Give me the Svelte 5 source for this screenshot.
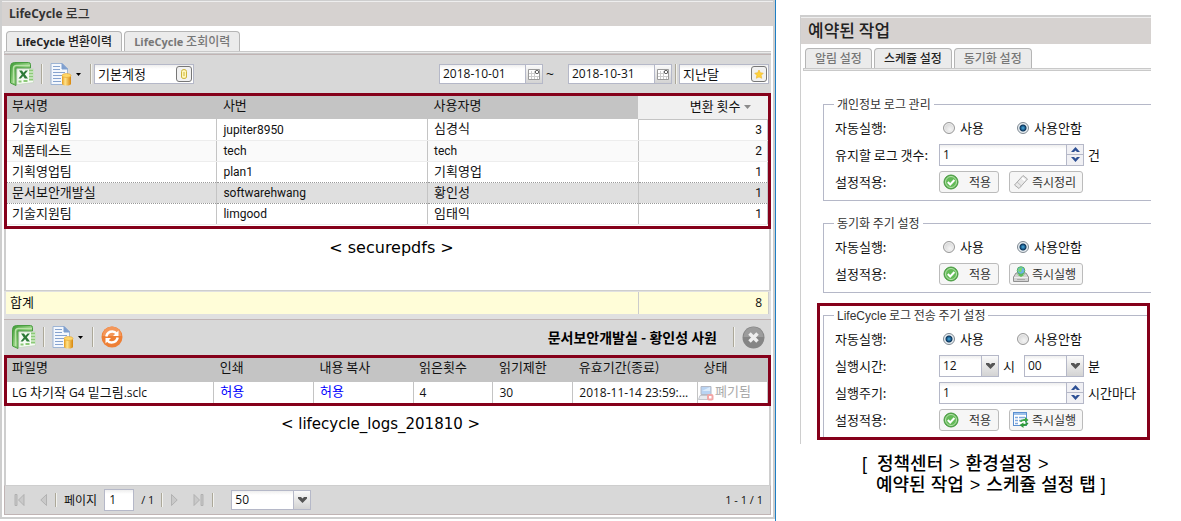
<script>
  const users = [
    { dept: '기술지원팀', id: 'jupiter8950', name: '심경식', count: 3 },
    { dept: '제품테스트', id: 'tech', name: 'tech', count: 2 },
    { dept: '기획영업팀', id: 'plan1', name: '기획영업', count: 1 },
    { dept: '문서보안개발실', id: 'softwarehwang', name: '황인성', count: 1, selected: true },
    { dept: '기술지원팀', id: 'limgood', name: '임태익', count: 1 }
  ];
  const latin = (s) => /^[\x00-\x7f]+$/.test(s);
</script>

{#snippet excel()}
  <svg class="ico" width="24" height="24" viewBox="0 0 24 24" aria-hidden="true">
    <defs>
      <linearGradient id="xg" x1="0" y1="0" x2="1" y2="1">
        <stop offset="0" stop-color="#3d9a35" /><stop offset=".5" stop-color="#8fcf7c" /><stop offset="1" stop-color="#4fa33f" />
      </linearGradient>
    </defs>
    <path d="M4.500 .5H18.500Q20.500 .5 20.500 2.500V6H6V23.500L.5 21V4.500Q.5 .5 4.500 .5Z" fill="url(#xg)" stroke="#4a9c42" />
    <path d="M3.500 21V6.500Q3.500 3.500 6.500 3.500H20" fill="none" stroke="#b9e2a8" stroke-width="1.500" />
    <path d="M7 7H23.500V20.500L7 22.500Z" fill="#f6fbf4" stroke="#b5cfae" stroke-width=".5" />
    <path d="M19 8.500h4M19 11.500h4M19 14.500h4M19 17.500h4" stroke="#8cc978" stroke-width="2" />
    <path d="M8.500 19.500h3M13.500 19h4" stroke="#8cc978" stroke-width="2" />
    <path d="M9 8.500h3l1.500 2.200L15.500 8.500H18l-3.200 3.700L18 16.500h-3.200l-1.700-2.500-2.200 2.500H8.500l3.300-4Z" fill="#2d7a38" />
  </svg>
{/snippet}

{#snippet doc()}
  <svg class="ico" width="22" height="24" viewBox="0 0 22 24" aria-hidden="true">
    <defs>
      <linearGradient id="cy" x1="0" x2="1"><stop offset="0" stop-color="#e59a1a" /><stop offset=".35" stop-color="#ffe38a" /><stop offset="1" stop-color="#d8860b" /></linearGradient>
    </defs>
    <path d="M1 1.500H12L17.500 7V22.500H1Z" fill="#f4f8fd" stroke="#9db4d4" />
    <path d="M12 1.500V7H17.500Z" fill="#7f9fce" stroke="#7f9fce" />
    <path d="M3 4.500h7M3 7.500h7M3 10.500h12M3 13.500h10M3 16.500h8M3 19.500h8" stroke="#86a3cf" />
    <path d="M12 13.500V21.500Q12 23.500 16.500 23.500T21 21.500V13.500Z" fill="url(#cy)" />
    <ellipse cx="16.500" cy="13.500" rx="4.500" ry="2" fill="#ffd768" stroke="#e0a030" stroke-width=".6" />
  </svg>
  <svg width="5" height="3" viewBox="0 0 5 3" aria-hidden="true"><path d="M0 0H5L2.500 3Z" fill="#000" /></svg>
{/snippet}

{#snippet calendar()}
  <svg width="12" height="12" viewBox="0 0 12 12" aria-hidden="true">
    <path d="M.5 1.500H11.500V11.500H.5Z" fill="#fff" stroke="#999" />
    <path d="M3.500 3V11M6.500 3V11M9.500 8V11M1 5.500H7M1 8.500H11" stroke="#ccc" />
    <rect x="7.500" y="2.500" width="3" height="3" rx="1" fill="#fff" stroke="#333" />
  </svg>
{/snippet}

{#snippet check()}
  <svg width="16" height="16" viewBox="0 0 16 16" aria-hidden="true">
    <circle cx="8" cy="8" r="7" fill="#58ad4e" stroke="#479a40" />
    <circle cx="8" cy="8" r="5.500" fill="#63bb58" stroke="#b8e2ad" />
    <path d="M4.800 8l2.400 2.500L11.400 6" fill="none" stroke="#fff" stroke-width="2" />
  </svg>
{/snippet}

{#snippet chevron()}
  <span class="drop"><svg width="9" height="6" viewBox="0 0 9 6" aria-hidden="true"><path d="M0 0H3L4.500 1.500L6 0H9V1.500L4.500 6L0 1.500Z" fill="#555" /></svg></span>
{/snippet}

{#snippet spinner(id)}
  <span class="box spin">
    <input {id} class="num" type="text" inputmode="numeric" value="1" />
    <span class="steps">
      <button type="button" aria-label="증가"><svg width="9" height="5" viewBox="0 0 9 5"><path d="M0 5L4.500 0L9 5H6L4.500 3.500L3 5Z" fill="#2c4f94" /></svg></button>
      <button type="button" aria-label="감소"><svg width="9" height="5" viewBox="0 0 9 5"><path d="M0 0L4.500 5L9 0H6L4.500 1.500L3 0Z" fill="#2c4f94" /></svg></button>
    </span>
  </span>
{/snippet}

{#snippet auto(name, on)}
  <div class="row" role="radiogroup" aria-label="자동실행">
    <span class="lab">자동실행:</span>
    <label class="radio first"><input type="radio" {name} checked={on} />사용</label>
    <label class="radio"><input type="radio" {name} checked={!on} />사용안함</label>
  </div>
{/snippet}

<div class="page">
  <main class="log">
    <div class="frame">
      <h1 class="title">LifeCycle <b>로그</b></h1>
      <div class="inner">
        <div class="tabs" role="tablist">
          <button type="button" class="tab on" role="tab" aria-selected="true">LifeCycle <b>변환이력</b></button>
          <button type="button" class="tab" role="tab" aria-selected="false">LifeCycle <b>조회이력</b></button>
        </div>
        <div class="strip"></div>

        <div class="bar top">
          <button type="button" class="plain" aria-label="Excel">{@render excel()}</button>
          <i class="sep"></i>
          <button type="button" class="plain menu" aria-label="문서">{@render doc()}</button>
          <i class="sep near"></i>
          <span class="box account">
            <input class="ko" type="text" aria-label="계정" value="기본계정" />
            <button type="button" class="pick" aria-label="계정 선택">
              <svg width="12" height="12" viewBox="0 0 12 12"><path d="M3.500 3.500Q3.500 1.500 6 1.500T8.500 3.500V9Q8.500 10.500 6 10.500T3.500 9Z" fill="#fff6b8" stroke="#cdb43c" /><path d="M6 4V8" stroke="#cdb43c" /></svg>
            </button>
          </span>
          <span class="grow"></span>
          <span class="box date">
            <input type="text" aria-label="시작일" value="2018-10-01" />
            <button type="button" class="cal" aria-label="시작일 달력">{@render calendar()}</button>
          </span>
          <span class="tilde">~</span>
          <span class="box date">
            <input type="text" aria-label="종료일" value="2018-10-31" />
            <button type="button" class="cal" aria-label="종료일 달력">{@render calendar()}</button>
          </span>
          <i class="sep tight"></i>
          <span class="box period">
            <input class="ko" type="text" aria-label="기간" value="지난달" />
            <button type="button" class="pick" aria-label="기간 선택">
              <svg width="12" height="12" viewBox="0 0 12 12"><path d="M6 2L7.300 4.700L10.300 5.200L8.200 7.300L8.700 10.300L6 8.900L3.300 10.300L3.800 7.300L1.700 5.200L4.700 4.700Z" fill="#ffd23c" stroke="#eeb52b" stroke-width=".6" /></svg>
            </button>
          </span>
        </div>

        <div class="red list">
          <table class="users">
            <colgroup><col class="c27" /><col class="c28" /><col class="c28" /><col /></colgroup>
            <thead>
              <tr>
                <th>부서명</th><th>사번</th><th>사용자명</th>
                <th class="sorted">변환 횟수<svg width="7" height="4" viewBox="0 0 7 4" aria-hidden="true"><path d="M0 0H7L3.500 4Z" fill="#8a8a8a" /></svg></th>
              </tr>
            </thead>
            <tbody>
              {#each users as u}
                <tr class:sel={u.selected}>
                  <td>{u.dept}</td>
                  <td class="la">{u.id}</td>
                  <td class:la={latin(u.name)}>{u.name}</td>
                  <td class="la n">{u.count}</td>
                </tr>
              {/each}
            </tbody>
          </table>
        </div>

        <div class="blank first"><p class="note">&lt; securepdfs &gt;</p></div>
        <div class="sum"><span>합계</span><span class="total">8</span></div>

        <div class="bar sub">
          <button type="button" class="plain" aria-label="Excel">{@render excel()}</button>
          <i class="sep"></i>
          <button type="button" class="plain menu" aria-label="문서">{@render doc()}</button>
          <i class="sep"></i>
          <button type="button" class="plain" aria-label="새로고침">
            <svg width="22" height="22" viewBox="0 0 22 22">
              <circle cx="11" cy="11" r="10.500" fill="#ee7f35" /><path d="M1.500 10a9.500 9.500 0 0 1 19 0Z" fill="#f4975a" />
              <path d="M5.300 10.500Q6.500 5.500 11.500 5.500Q14 5.500 15.500 7.500" fill="none" stroke="#fff" stroke-width="2.500" />
              <path d="M17.500 4.500V10H12Z" fill="#fff" />
              <path d="M16.700 11.500Q15.500 16.500 10.500 16.500Q8 16.500 6.500 14.500" fill="none" stroke="#fff" stroke-width="2.500" />
              <path d="M4.500 17.500V12H10Z" fill="#fff" />
            </svg>
          </button>
          <span class="grow"></span>
          <strong class="who">문서보안개발실 - 황인성 사원</strong>
          <i class="sep"></i>
          <button type="button" class="plain" aria-label="닫기">
            <svg width="23" height="23" viewBox="0 0 23 23">
              <circle cx="11.500" cy="11.500" r="11" fill="#858585" /><path d="M1.500 11a10 10 0 0 1 20 0Z" fill="#9c9c9c" />
              <path d="M7.500 7.500L15.500 15.500M15.500 7.500L7.500 15.500" stroke="#eee" stroke-width="3.500" />
            </svg>
          </button>
        </div>

        <div class="red">
          <table class="files">
            <colgroup><col class="f1" /><col class="f2" /><col class="f2" /><col class="f3" /><col class="f3" /><col class="f4" /><col /></colgroup>
            <thead>
              <tr><th>파일명</th><th>인쇄</th><th>내용 복사</th><th>읽은횟수</th><th>읽기제한</th><th>유효기간(종료)</th><th>상태</th></tr>
            </thead>
            <tbody>
              <tr>
                <td class="la">LG <span class="ko">차기작</span> G4 <span class="ko">밑그림</span>.sclc</td>
                <td class="allow">허용</td>
                <td class="allow">허용</td>
                <td class="la">4</td>
                <td class="la">30</td>
                <td class="la">2018-11-14 23:59:...</td>
                <td class="state">
                  <svg width="16" height="16" viewBox="0 0 16 16" aria-hidden="true">
                    <path d="M3 1.500H13V9.500H3Z" fill="#b9d3f2" stroke="#b4b8c4" /><path d="M4 6L12 2V6Z" fill="#dcebfb" />
                    <path d="M2 10.500H13L15 14.500H.5Z" fill="#e8eaee" stroke="#c3c6cd" /><rect x="9" y="9" width="6.500" height="6.500" rx="2" fill="#f3a6a6" /><rect x="11" y="11" width="2.500" height="2.500" fill="#fff" />
                  </svg>폐기됨
                </td>
              </tr>
            </tbody>
          </table>
        </div>

        <div class="blank second"><p class="note">&lt; lifecycle_logs_201810 &gt;</p></div>

        <div class="pager">
          <button type="button" class="plain" aria-label="처음"><svg width="11" height="12" viewBox="0 0 11 12"><path d="M1 .5H3V11.500H1ZM10 .5V11.500L4.500 6Z" fill="#c9c9c9" stroke="#aaa" stroke-width=".8" /></svg></button>
          <button type="button" class="plain prev" aria-label="이전"><svg width="7" height="12" viewBox="0 0 7 12"><path d="M6.500 .5V11.500L.8 6Z" fill="#c9c9c9" stroke="#aaa" stroke-width=".8" /></svg></button>
          <i class="sep short"></i>
          <label for="pg">페이지</label>
          <input id="pg" class="pg" type="text" value="1" />
          <span class="of">/ 1</span>
          <i class="sep short"></i>
          <button type="button" class="plain" aria-label="다음"><svg width="7" height="12" viewBox="0 0 7 12"><path d="M.5 .5V11.500L6.200 6Z" fill="#c9c9c9" stroke="#aaa" stroke-width=".8" /></svg></button>
          <button type="button" class="plain last" aria-label="마지막"><svg width="11" height="12" viewBox="0 0 11 12"><path d="M8 .5H10V11.500H8ZM1 .5V11.500L6.500 6Z" fill="#c9c9c9" stroke="#aaa" stroke-width=".8" /></svg></button>
          <i class="sep short"></i>
          <span class="box size"><select aria-label="페이지 크기"><option>50</option></select>{@render chevron()}</span>
          <span class="grow"></span>
          <span>1 - 1 / 1</span>
        </div>
      </div>
    </div>
  </main>

  <aside class="side">
    <section class="jobs">
      <h2 class="title big">예약된 작업</h2>
      <div class="tabs" role="tablist">
        <button type="button" class="tab" role="tab" aria-selected="false"><b>알림 설정</b></button>
        <button type="button" class="tab on" role="tab" aria-selected="true"><b>스케쥴 설정</b></button>
        <button type="button" class="tab" role="tab" aria-selected="false"><b>동기화 설정</b></button>
      </div>
      <div class="strip"></div>

      <form class="forms">
        <fieldset>
          <legend>개인정보 로그 관리</legend>
          {@render auto('a', false)}
          <div class="row"><label class="lab" for="keep">유지할 로그 갯수:</label>{@render spinner('keep')}<span class="unit">건</span></div>
          <div class="row">
            <span class="lab">설정적용:</span>
            <button type="button" class="btn apply">{@render check()}<span>적용</span></button>
            <button type="button" class="btn run">
              <svg width="16" height="16" viewBox="0 0 16 16" aria-hidden="true"><path d="M10 1.500L14.500 5L6 14.500L1.500 11Z" fill="#e8e8e8" stroke="#aaa" /><path d="M4 8L8.500 12" stroke="#c0c0c0" /><path d="M9 4L12 6.500" stroke="#fff" stroke-width="2" /></svg><span>즉시정리</span>
            </button>
          </div>
        </fieldset>

        <fieldset>
          <legend>동기화 주기 설정</legend>
          {@render auto('b', false)}
          <div class="row">
            <span class="lab">설정적용:</span>
            <button type="button" class="btn apply">{@render check()}<span>적용</span></button>
            <button type="button" class="btn run">
              <svg width="16" height="16" viewBox="0 0 16 16" aria-hidden="true"><path d="M3 7H13L15.500 11V15.500H.5V11Z" fill="#d2d2d2" stroke="#909090" /><path d="M1 11.500H15" stroke="#eee" /><path d="M4 13.500H12" stroke="#aaa" /><path d="M6 7H10V8.500H12L8 11L4 8.500H6Z" fill="#5fbe58" /><circle cx="8" cy="4.500" r="3.800" fill="#6db4ea" stroke="#55b35a" /><path d="M5 4Q7 .8 9.500 2Q8 4 8.500 5.500Q6.500 7.500 5 4Z" fill="#7bdc68" /></svg><span>즉시실행</span>
            </button>
          </div>
        </fieldset>

        <div class="red mark">
          <fieldset class="open">
            <legend><span class="arial">LifeCycle</span> 로그 전송 주기 설정</legend>
            {@render auto('c', true)}
            <div class="row">
              <label class="lab" for="hour">실행시간:</label>
              <span class="box time"><select id="hour"><option>12</option></select>{@render chevron()}</span>
              <span class="unit hour">시</span>
              <span class="box time"><select aria-label="분"><option>00</option></select>{@render chevron()}</span>
              <span class="unit">분</span>
            </div>
            <div class="row"><label class="lab" for="cycle">실행주기:</label>{@render spinner('cycle')}<span class="unit">시간마다</span></div>
            <div class="row">
              <span class="lab">설정적용:</span>
              <button type="button" class="btn apply">{@render check()}<span>적용</span></button>
              <button type="button" class="btn run">
                <svg width="16" height="16" viewBox="0 0 16 16" aria-hidden="true"><rect x=".5" y=".5" width="13" height="13" fill="#fff" stroke="#5b8fd0" /><path d="M1 2H13" stroke="#9cc0ea" stroke-width="2" /><path d="M2 5.500h3M2 8.500h3M2 11.500h3M6 5.500h6M6 8.500h3" stroke="#7fa9de" stroke-width="1.500" /><path d="M6.500 9.500Q8 6.500 12 7V5L15.500 8L12 11V9Q9.500 8.500 8.500 10Z" fill="#3da648" /><path d="M15.500 11Q14 14.500 10.500 14V16L6.500 13L10.500 10.500V12Q12.500 12 13.500 10.500Z" fill="#2f9a3c" /></svg><span>즉시실행</span>
              </button>
            </div>
          </fieldset>
        </div>
      </form>
    </section>
    <div class="path">
      <p>[&nbsp; 정책센터 <i>&gt;</i> 환경설정 <i>&gt;</i></p>
      <p class="next">예약된 작업 <i>&gt;</i> 스케쥴 설정 탭 ]</p>
    </div>
  </aside>
</div>

<style>
  :global(body) { margin: 0; background: #fff; }
  .page {
    --ko: 'Noto Sans CJK KR', sans-serif;
    --la: 'Open Sans', 'Noto Sans CJK KR', sans-serif;
    display: grid;
    grid-template-columns: minmax(0, 776fr) minmax(0, 351fr);
    column-gap: 24px;
    padding-right: 30px;
    font: 13px/16px var(--ko);
    color: #111;
  }
  .page * { box-sizing: border-box; }
  button, input, select { font: inherit; color: inherit; margin: 0; padding: 0; border: 0; background: none; }
  h1, h2, p { margin: 0; }
  svg { display: block; flex: none; }
  .grow { flex: 1; }

  .log { border-right: 1px solid #1f7fc4; padding-bottom: 2px; }
  .frame { border: 2px solid #cecece; border-top: 1px solid #cecece; }
  .title { height: 25px; border-top: 1px solid #eee; background: #d6d2d0; padding: 0 7px; font: bold 12px/23px var(--la); color: #333; }
  .title b { font: 500 13px/21px var(--ko); }
  .title.big { height: 27px; padding: 0 7px; font: 500 17px/24px var(--ko); color: #222; }
  .inner { padding: 0 2px 2px; }
  .tabs { display: flex; gap: 2px; padding: 5px 2px 0; }
  .tab { height: 20px; padding: 0 9px; border: 1px solid #b5b5b5; border-bottom: 0; border-radius: 4px 4px 0 0; background: #ebebeb; font: bold 11px/20px var(--la); color: #777; white-space: nowrap; }
  .tab b { font: 500 12px/18px var(--ko); }
  .tab.on { color: #222; }
  .strip { height: 3px; border: 1px solid #c9c9c9; border-right: 0; background: #ebebeb; }

  .bar { display: flex; align-items: center; gap: 7px; padding: 0 2px 0 6px; background: #d8d8d8; border-top: 1px solid #c0b4b4; }
  .bar.top { height: 39px; }
  .bar.sub { height: 36px; padding: 0 6px 0 8px; }
  .plain { display: flex; align-items: center; }
  .menu { gap: 4px; padding: 0 2px 0 0; }
  .sep { width: 2px; height: 20px; border-left: 1px solid #aca899; border-right: 1px solid #f2f2ee; }
  .sep.short { height: 14px; }
  .sep.near { margin-right: -5px; }
  .sep.tight { margin: 0 -5px 0 -4px; }
  .bar .sep { flex: none; }
  .box { display: flex; height: 20px; border: 1px solid #b5b8c8; background: linear-gradient(#eee, #fff 4px); font: 12px/18px var(--la); }
  .box input, .box select { flex: 1; width: 100%; min-width: 0; padding: 0 3px; appearance: none; }
  .box input.ko { font: 13px/18px var(--ko); }
  .account { width: 100px; }
  .period { width: 90px; }
  .date { width: 104px; }
  .pick { display: flex; align-items: center; justify-content: center; flex: none; width: 16px; margin: 1px; border: 1px solid #777; border-radius: 3px; background: #f1f1f1; }
  .cal, .drop { display: flex; align-items: center; justify-content: center; flex: none; width: 17px; border-left: 1px solid #b5b8c8; background: linear-gradient(#fafafa, #d3d3d3); }
  .drop { pointer-events: none; }
  .tilde { width: 15px; margin: 0 0 0 -4px; font: 14px/16px var(--la); }

  .red { border: 3px solid #85001a; }
  .list { padding-bottom: 1px; }
  table { width: 100%; table-layout: fixed; border-collapse: collapse; }
  th, td { padding: 0 6px 0 5px; text-align: left; font-weight: 400; white-space: nowrap; overflow: hidden; }
  th + th, td + td { padding-left: 6px; }
  th { height: 23px; padding-bottom: 5px; background: #c4c4c4; }
  th.sorted { background: #f0f0f0; border-bottom: 1px solid #c4c4c4; text-align: right; padding: 0 17px 2px 0; }
  th.sorted svg { display: inline-block; margin: 0 0 2px 3px; }
  td { height: 21px; padding-bottom: 2px; border-right: 1px solid #c4c4c4; border-bottom: 1px solid #ededed; }
  td.la { font: 12px/16px Roboto, var(--la); padding-top: 1px; padding-bottom: 0; }
  td.n { text-align: right; padding-right: 5px; }
  tr:nth-child(even) td { background: #fafafa; }
  tr.sel td { background: #dfdfdf; border-bottom: 1px dotted #999; }
  tr:has(+ .sel) td { border-bottom: 1px dotted #999; }
  .c27 { width: 27.600%; }
  .c28 { width: 27.700%; }
  .files th { height: 24px; }
  .files td { border-bottom: 0; }
  .files td.la { font: 12px/16px var(--la); }
  .files .ko { font: 13px/16px var(--ko); }
  .f1 { width: 27.200%; }
  .f2 { width: 13.100%; }
  .f3 { width: 10.500%; }
  .f4 { width: 16.400%; }
  .allow { color: #00f; }
  .files td.state { padding: 0; color: #aaa; }
  .state svg { display: inline-block; vertical-align: middle; margin-right: 1px; }

  .blank { border: solid #cecece; border-width: 0 2px; text-align: center; }
  .blank.first { height: 62px; padding-top: 9px; border-bottom-width: 1px; }
  .blank.second { height: 79px; padding-top: 8px; }
  .note { font: 16px/20px 'DejaVu Sans', var(--ko); color: #000; padding-left: 8px; }
  .second .note { padding: 0 14px 0 0; font-size: 15px; }
  .sum { display: flex; justify-content: space-between; height: 28px; padding: 1px 2px 5px; background: #e0e0e0; line-height: 20px; }
  .sum span { flex: 1; padding-left: 4px; background: #fffdd8; }
  .sum .total { flex: 0 0 17.200%; border: solid #ccc; border-width: 0 1px; padding-right: 6px; text-align: right; font: 12px/22px var(--la); }
  .who { font: bold 14px/16px var(--ko); margin-right: 9px; color: #000; }

  .pager { display: flex; align-items: center; gap: 7px; height: 30px; padding: 0 7px 0 8px; border: 1px solid #c0b4b4; border-top-color: #cecece; background: #d8d8d8; font: 11px/16px var(--la); }
  .pager .plain { padding: 0 1px; }
  .pager .prev { margin: 0 0 0 6px; }
  .pager .last { margin: 0 0 0 6px; }
  .pager label { font: 12px/16px var(--ko); }
  .pg { width: 30px; height: 22px; padding: 0 4px; border: 1px solid #b5b8c8; background: linear-gradient(#eee, #fff 4px); font: 12px/20px var(--la); }
  .size { width: 80px; margin-left: 10px; }

  .side { padding-top: 15px; }
  .jobs { border: solid #cecece; border-width: 2px 0 0 1px; padding-bottom: 4px; margin-bottom: 10px; }
  .jobs .tabs { padding: 4px 4px 0; }
  .jobs .strip { margin-left: 2px; }
  .forms { display: block; padding: 25px 0 0 22px; }
  fieldset { min-width: 0; margin: 0 0 14px; padding: 2px 0 5px 11px; border: 1px solid #b5b8c8; border-right: 0; }
  fieldset:nth-of-type(2) { margin: 0; }
  legend { height: 16px; margin-left: -1px; padding: 0 3px; font: 12px/16px var(--ko); color: #333; }
  .arial { font: 12px/16px 'Liberation Sans', sans-serif; }
  .row { display: flex; align-items: center; height: 27px; white-space: nowrap; }
  .lab { flex: 0 0 104px; }
  .radio { display: flex; align-items: center; gap: 5px; padding-left: 4px; }
  .radio.first { width: 74px; }
  .radio input { appearance: none; width: 12px; height: 12px; border: 1px solid #999; border-radius: 50%; background: radial-gradient(circle at 60% 65%, #f4f4f4, #ccc); box-shadow: inset 0 0 0 1px #eee; }
  .radio input:checked { border-color: #7d8790; background: radial-gradient(circle at 50% 50%, #4fb0dd 0, #1c5f92 2px, #0d3457 3px, #e8eef2 4px); box-shadow: none; }
  .row .box { height: 22px; line-height: 20px; }
  .spin { width: 145px; }
  .time { width: 60px; }
  .steps { display: flex; flex-direction: column; flex: none; width: 17px; border-left: 1px solid #b5b8c8; }
  .steps button { display: flex; flex: 1; align-items: center; justify-content: center; background: #f0f0f4; }
  .steps button + button { border-top: 1px solid #b5b8c8; }
  .unit { padding-left: 4px; }
  .unit.hour { width: 25px; }
  .btn { display: flex; align-items: center; height: 22px; padding: 0 3px; border: 1px solid #bbb; border-radius: 3px; background: #f6f6f6; color: #333; font: 12px/18px var(--ko); }
  .btn span { flex: 1; text-align: center; }
  .apply { width: 60px; margin-right: 10px; }
  .apply span { padding-left: 6px; }
  .run { width: 74px; }
  .mark { margin: 10px 1px 0 -6px; padding: 1px 0 0 3px; }
  .mark fieldset { margin: 0; border-bottom: 0; padding-bottom: 4px; }
  .path { padding-left: 62px; font: 500 18px/21px 'Liberation Sans', var(--ko); color: #000; white-space: nowrap; }
  .path i { font-style: normal; padding: 0 1px; }
  .path .next { padding-left: 14px; }
</style>
